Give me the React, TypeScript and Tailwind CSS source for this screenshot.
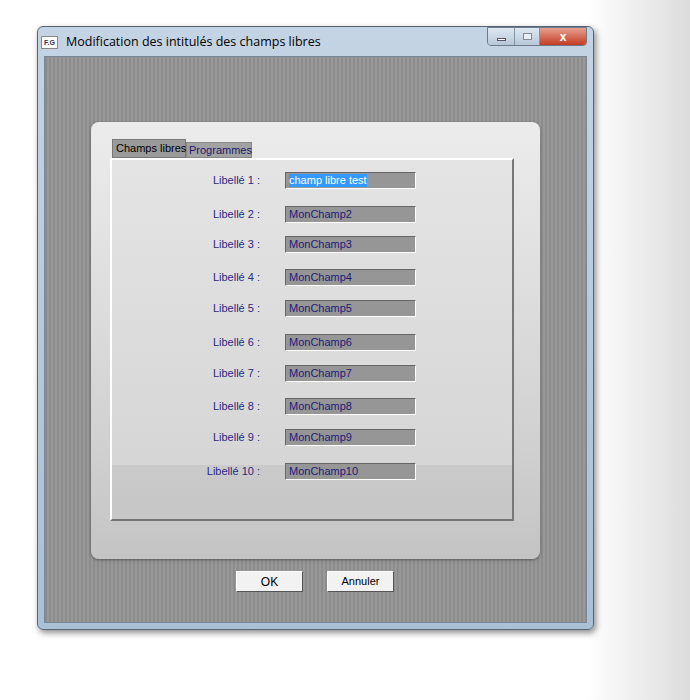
import * as React from 'react';

const rows = [
  { label: 'Libellé 1 :', value: 'champ libre test', mt: 'mt-[11px]', sel: true },
  { label: 'Libellé 2 :', value: 'MonChamp2', mt: 'mt-[16px]' },
  { label: 'Libellé 3 :', value: 'MonChamp3', mt: 'mt-[12px]' },
  { label: 'Libellé 4 :', value: 'MonChamp4', mt: 'mt-[15px]' },
  { label: 'Libellé 5 :', value: 'MonChamp5', mt: 'mt-[13px]' },
  { label: 'Libellé 6 :', value: 'MonChamp6', mt: 'mt-[16px]' },
  { label: 'Libellé 7 :', value: 'MonChamp7', mt: 'mt-[13px]' },
  { label: 'Libellé 8 :', value: 'MonChamp8', mt: 'mt-[15px]' },
  { label: 'Libellé 9 :', value: 'MonChamp9', mt: 'mt-[13px]' },
  { label: 'Libellé 10 :', value: 'MonChamp10', mt: 'mt-[16px]' },
];

export default function App() {
  return (
    <div className="w-[690px] h-[700px] bg-[linear-gradient(90deg,#ffffff_0%,#ffffff_85%,#dcdcdc_100%)] pt-[26px] pl-[37px] font-[Liberation_Sans,Arial,sans-serif]">
      <div className="w-[557px] h-[604px] rounded-[6px] border border-[#5a6572] bg-[linear-gradient(180deg,#c4d4e4,#aac0d6)] shadow-[2px_3px_6px_rgba(0,0,0,0.45)] flex flex-col">
        {/* Title bar */}
        <div className="h-[29px] flex items-start pl-[3px] pr-[6px]">
          <div className="mt-[9px] w-[17px] h-[13px] bg-white border border-[#888] text-[7px] leading-[11px] text-center font-bold text-[#335]">F.G</div>
          <span className="mt-[6px] ml-[8px] text-[12.5px] text-black font-[Open_Sans,sans-serif]">Modification des intitulés des champs libres</span>
          <div className="ml-auto flex border border-[#6c7a8a] rounded-b-[4px] overflow-hidden h-[19px]">
            <div className="w-[27px] bg-[linear-gradient(180deg,#dfe8f2,#b7c7d8)] border-r border-[#8394a6] flex items-center justify-center">
              <div className="w-[9px] h-[3px] bg-white border border-[#556] mt-[5px]" />
            </div>
            <div className="w-[25px] bg-[linear-gradient(180deg,#dfe8f2,#b7c7d8)] border-r border-[#8394a6] flex items-center justify-center">
              <div className="w-[9px] h-[7px] border border-[#889] bg-[#e8eef4]" />
            </div>
            <div className="w-[46px] bg-[linear-gradient(180deg,#e6a090,#c43c24)] flex items-center justify-center text-white font-bold text-[12px]">x</div>
          </div>
        </div>
        {/* Client area */}
        <div className="mx-[6px] mb-[6px] flex-1 bg-[repeating-linear-gradient(90deg,#8c8c8c_0px,#8c8c8c_2px,#989898_2px,#989898_4px)] border border-[#7a8796] pt-[65px] pl-[46px]">
          <div className="w-[449px] h-[437px] rounded-[8px] bg-[linear-gradient(180deg,#ececec,#d2d2d2_70%,#c4c4c4)] shadow-[0_1px_3px_rgba(0,0,0,0.4)] pt-[17px] pl-[19px]">
            <div className="flex items-end pl-[2px] h-[19px]">
              <div className="w-[74px] h-[19px] whitespace-nowrap bg-[#9a9a9a] border border-[#777] text-[11px] text-black px-[3px] leading-[16px]">Champs libres</div>
              <div className="w-[66px] h-[16px] whitespace-nowrap bg-[#a2a2a2] border border-[#888] text-[11px] text-[#1a1a6a] px-[2px] leading-[15px]">Programmes</div>
            </div>
            <div className="w-[404px] h-[363px] border-2 border-t-white border-l-white border-r-[#777] border-b-[#777] bg-[linear-gradient(180deg,#e4e4e4,#d6d6d6_85%,#cacaca_85%,#c6c6c6)]">
              {rows.map((r) => (
                <div key={r.label} className={`${r.mt} flex items-center h-[18px]`}>
                  <div className="w-[148px] text-right text-[11px] text-[#2a2a80]">{r.label}</div>
                  <div className="ml-[25px] w-[131px] h-[17px] bg-[#969696] border border-t-[#666] border-l-[#666] border-r-white border-b-white flex items-center px-[3px]">
                    <span className={`text-[11px] leading-[13px] ${r.sel ? 'bg-[#3399ff] text-white' : 'text-[#1c1c78]'}`}>{r.value}</span>
                  </div>
                </div>
              ))}
            </div>
          </div>
          <div className="flex ml-[145px] mt-[12px] gap-[24px]">
            <button className="w-[67px] h-[21px] bg-[#f2f2f2] border border-t-white border-l-white border-r-[#555] border-b-[#555] text-[12px] text-black">OK</button>
            <button className="w-[67px] h-[21px] bg-[#f2f2f2] border border-t-white border-l-white border-r-[#555] border-b-[#555] text-[11px] text-black">Annuler</button>
          </div>
        </div>
      </div>
    </div>
  );
}
